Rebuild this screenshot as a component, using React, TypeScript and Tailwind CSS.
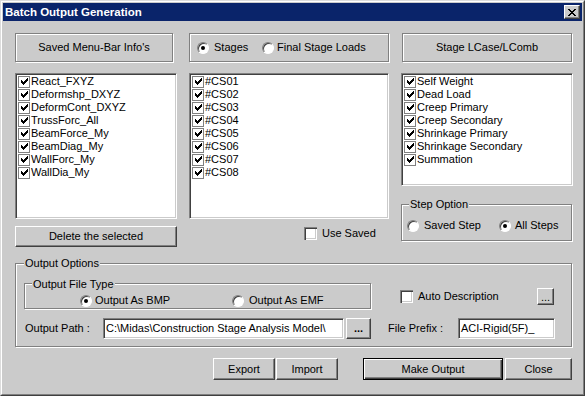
import React from "react";

const RAISED =
  "bg-[#cbcbcb] border border-t-white border-l-white border-r-[#404040] border-b-[#404040] shadow-[inset_-1px_-1px_0_#808080]";
const ETCHED = "border border-[#808080] shadow-[inset_1px_1px_0_#fff,1px_1px_0_#fff]";
const SUNKEN =
  "bg-white border border-t-[#808080] border-l-[#808080] border-r-white border-b-white shadow-[inset_1px_1px_0_#404040,inset_-1px_-1px_0_#cbcbcb]";

function CheckMark() {
  return (
    <svg width="7" height="7" viewBox="0 0 7 7" shapeRendering="crispEdges">
      <path
        d="M0 2h1v3H0zM1 3h1v3H1zM2 4h1v3H2zM3 3h1v3H3zM4 2h1v3H4zM5 1h1v3H5zM6 0h1v3H6z"
        fill="#000"
      />
    </svg>
  );
}

function ListItem({ label }: { label: string }) {
  return (
    <div className="h-[13px] flex items-center pl-px whitespace-nowrap">
      <span className="w-[12px] h-[12px] shrink-0 border border-[#808080] bg-white flex items-center justify-center">
        <CheckMark />
      </span>
      <span className="ml-px">{label}</span>
    </div>
  );
}

function SunkenCheck() {
  return (
    <span className="w-[13px] h-[13px] shrink-0 bg-white shadow-[inset_1px_1px_0_#808080,inset_2px_2px_0_#404040,inset_-1px_-1px_0_#fff,inset_-2px_-2px_0_#cbcbcb]" />
  );
}

function Radio({ on }: { on?: boolean }) {
  return (
    <span className="w-[12px] h-[12px] shrink-0 rounded-full bg-white border border-t-[#808080] border-l-[#808080] border-r-white border-b-white shadow-[inset_1px_1px_0_#404040] flex items-center justify-center">
      {on ? <span className="w-[4px] h-[4px] rounded-full bg-black" /> : null}
    </span>
  );
}

function CloseGlyph() {
  return (
    <svg width="8" height="7" viewBox="0 0 8 7" shapeRendering="crispEdges">
      <path
        d="M0 0h2v1H0zM6 0h2v1H6zM1 1h2v1H1zM5 1h2v1H5zM2 2h4v1H2zM3 3h2v1H3zM2 4h4v1H2zM1 5h2v1H1zM5 5h2v1H5zM0 6h2v1H0zM6 6h2v1H6z"
        fill="#000"
      />
    </svg>
  );
}

const menuItems = [
  "React_FXYZ",
  "Deformshp_DXYZ",
  "DeformCont_DXYZ",
  "TrussForc_All",
  "BeamForce_My",
  "BeamDiag_My",
  "WallForc_My",
  "WallDia_My",
];
const stages = ["#CS01", "#CS02", "#CS03", "#CS04", "#CS05", "#CS06", "#CS07", "#CS08"];
const lcases = [
  "Self Weight",
  "Dead Load",
  "Creep Primary",
  "Creep Secondary",
  "Shrinkage Primary",
  "Shrinkage Secondary",
  "Summation",
];

export default function App() {
  return (
    <div className="w-[585px] h-[396px] font-['Liberation_Sans',Arial,sans-serif] text-[11px] leading-[13px] text-black">
      <div className="w-full h-full border border-t-[#dcdcdc] border-l-[#dcdcdc] border-r-[#404040] border-b-[#404040] bg-[#cbcbcb]">
        <div className="w-full h-full border border-t-white border-l-white border-r-[#808080] border-b-[#808080] p-px flex flex-col">
          {/* Title bar */}
          <div className="h-[18px] shrink-0 bg-[#0a246a] flex items-center justify-between pl-[2px] pr-[2px]">
            <span className="font-bold text-[11.5px] text-white whitespace-nowrap">Batch Output Generation</span>
            <span className={`${RAISED} w-[16px] h-[14px] flex items-center justify-center`}>
              <CloseGlyph />
            </span>
          </div>

          <div className="flex flex-col pl-[12px] pt-[12px]">
            {/* Top row */}
            <div className="flex items-start">
              {/* Column 1 */}
              <div className="w-[162px] flex flex-col">
                <div className={`${ETCHED} w-[158px] h-[29px] flex items-center justify-center whitespace-nowrap`}>
                  Saved Menu-Bar Info's
                </div>
                <div className={`${SUNKEN} mt-[11px] h-[146px] w-full p-px`}>
                  {menuItems.map((m) => (
                    <ListItem key={m} label={m} />
                  ))}
                </div>
                <div className={`${RAISED} mt-[7px] h-[21px] w-full flex items-center justify-center`}>
                  Delete the selected
                </div>
              </div>

              {/* Column 2 */}
              <div className="ml-[12px] w-[200px] flex flex-col">
                <div className={`${ETCHED} w-[200px] h-[29px] flex items-center pl-[7px] whitespace-nowrap`}>
                  <div className="w-[65px] flex items-center">
                    <Radio on />
                    <span className="ml-[5px]">Stages</span>
                  </div>
                  <div className="flex items-center">
                    <Radio />
                    <span className="ml-[3px]">Final Stage Loads</span>
                  </div>
                </div>
                <div className={`${SUNKEN} mt-[11px] h-[146px] w-full p-px`}>
                  {stages.map((s) => (
                    <ListItem key={s} label={s} />
                  ))}
                </div>
                <div className="mt-[8px] pl-[115px] flex items-center h-[13px]">
                  <SunkenCheck />
                  <span className="ml-[5px]">Use Saved</span>
                </div>
              </div>

              {/* Column 3 */}
              <div className="ml-[12px] w-[172px] flex flex-col">
                <div className={`${ETCHED} ml-px w-[170px] h-[29px] flex items-center justify-center whitespace-nowrap`}>
                  Stage LCase/LComb
                </div>
                <div className={`${SUNKEN} mt-[11px] h-[113px] w-full p-px`}>
                  {lcases.map((s) => (
                    <ListItem key={s} label={s} />
                  ))}
                </div>
                <div className={`${ETCHED} relative mt-[18px] w-[171px] h-[37px] pl-[5px] pt-[14px]`}>
                  <span className="absolute -top-[7px] left-[7px] px-px bg-[#cbcbcb] whitespace-nowrap">
                    Step Option
                  </span>
                  <div className="flex items-center h-[13px] whitespace-nowrap">
                    <div className="w-[92px] flex items-center">
                      <Radio />
                      <span className="ml-[5px]">Saved Step</span>
                    </div>
                    <div className="flex items-center">
                      <Radio on />
                      <span className="ml-[4px]">All Steps</span>
                    </div>
                  </div>
                </div>
              </div>
            </div>

            {/* Output Options */}
            <div className={`${ETCHED} relative mt-[16px] w-[557px] h-[84px] flex flex-col`}>
              <span className="absolute -top-[7px] left-[8px] px-px bg-[#cbcbcb] whitespace-nowrap">
                Output Options
              </span>
              <div className="mt-[19px] flex items-start">
                <div className={`${ETCHED} relative ml-[8px] w-[347px] h-[26px] pt-[10px] pl-[55px] whitespace-nowrap`}>
                  <span className="absolute -top-[6px] left-[7px] px-px bg-[#cbcbcb]">Output File Type</span>
                  <div className="flex items-center h-[13px]">
                    <div className="w-[152px] flex items-center">
                      <Radio on />
                      <span className="ml-[3px]">Output As BMP</span>
                    </div>
                    <div className="flex items-center">
                      <Radio />
                      <span className="ml-[5px]">Output As EMF</span>
                    </div>
                  </div>
                </div>
                <div className="ml-[29px] mt-[7px] flex items-center h-[13px] whitespace-nowrap">
                  <SunkenCheck />
                  <span className="ml-[5px]">Auto Description</span>
                </div>
                <div className={`${RAISED} ml-auto mr-[17px] mt-[5px] w-[17px] h-[17px] flex items-end justify-center pb-[2px] leading-[10px]`}>
                  ...
                </div>
              </div>
              <div className="mt-[9px] flex items-center h-[21px] whitespace-nowrap">
                <span className="ml-[9px] w-[78px]">Output Path :</span>
                <div className={`${SUNKEN} w-[241px] h-[21px] flex items-center pl-[2px] overflow-hidden`}>
                  C:\Midas\Construction Stage Analysis Model\
                </div>
                <div className={`${RAISED} ml-[2px] w-[25px] h-[21px] flex items-center justify-center font-bold`}>
                  ...
                </div>
                <span className="ml-[17px] w-[70px]">File Prefix :</span>
                <div className={`${SUNKEN} w-[97px] h-[21px] flex items-center pl-[2px] overflow-hidden`}>
                  ACI-Rigid(5F)_
                </div>
              </div>
            </div>

            {/* Bottom buttons */}
            <div className="mt-[11px] flex items-center">
              <div className={`${RAISED} ml-[198px] w-[62px] h-[22px] flex items-center justify-center`}>Export</div>
              <div className={`${RAISED} ml-px w-[62px] h-[22px] flex items-center justify-center`}>Import</div>
              <div className="ml-[25px] w-[140px] h-[22px] bg-[#cbcbcb] border border-black shadow-[inset_1px_1px_0_#fff,inset_-1px_-1px_0_#404040,inset_-2px_-2px_0_#808080] flex items-center justify-center">
                Make Output
              </div>
              <div className={`${RAISED} ml-[2px] w-[67px] h-[22px] flex items-center justify-center`}>Close</div>
            </div>
          </div>
        </div>
      </div>
    </div>
  );
}
